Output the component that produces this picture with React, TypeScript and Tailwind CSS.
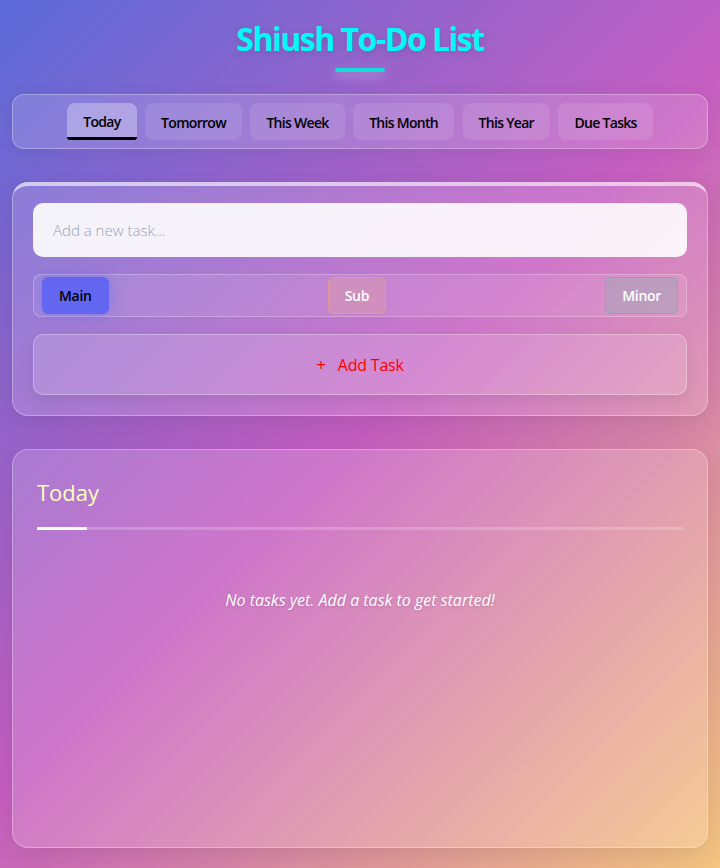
import React from "react";

const tabs = ["Today", "Tomorrow", "This Week", "This Month", "This Year", "Due Tasks"];

export default function App() {
  return (
    <div
      className="min-h-screen px-3 pt-[19px] pb-5 bg-[linear-gradient(135deg,#5a6ad8_0%,#c65ec1_50%,#f6c680_100%)]"
      style={{ fontFamily: '"Open Sans", "Noto Sans", sans-serif' }}
    >
      <h1 className="text-center text-[32px] leading-[40px] font-bold text-[#00fbf6] tracking-[-1.5px] [text-shadow:0_2px_8px_rgba(0,0,0,0.12)]">
        Shiush To-Do List
      </h1>
      <div className="mx-auto mt-[9px] h-[4px] w-[50px] rounded-full bg-[#10e0d6] shadow-[0_4px_10px_rgba(255,255,255,0.35)]" />

      <nav className="mt-[22px] flex justify-center gap-[8.5px] rounded-xl border border-white/30 bg-white/15 py-2 shadow-[0_4px_20px_rgba(0,0,0,0.06)]">
        {tabs.map((t, i) => (
          <button
            key={t}
            className={
              i === 0
                ? "h-[37px] rounded-t-lg rounded-b-[3px] border-b-[3px] border-black bg-white/30 px-4 pt-[3px] text-[14px] font-semibold text-black tracking-[-0.7px]"
                : "h-[37px] rounded-lg bg-white/10 px-4 pt-[2px] text-[14px] font-semibold text-black tracking-[-0.7px]"
            }
          >
            {t}
          </button>
        ))}
      </nav>

      <section className="mt-[33px] rounded-2xl border border-white/30 border-t-[4px] border-t-white/60 bg-white/15 px-5 pb-5 pt-[17px] shadow-[0_8px_30px_rgba(0,0,0,0.1)]">
        <input
          placeholder="Add a new task..."
          className="h-[54px] w-full rounded-[10px] bg-white/90 px-5 text-[15px] font-light text-gray-700 outline-none placeholder:text-[#9aa3b5]"
        />
        <div className="mt-[17px] flex h-[43px] items-center justify-between rounded-lg border border-white/25 bg-white/10 px-2">
          <button className="h-[37px] rounded-md border border-[#6366f1] bg-[#6366f1] px-4 text-[14px] font-semibold text-black shadow-[0_0_14px_rgba(99,102,241,0.55)] tracking-[-0.3px]">
            Main
          </button>
          <button className="h-[37px] rounded-md border border-[#e6a07a]/70 bg-[#e0a0a0]/40 px-4 text-[14px] font-semibold text-white tracking-[-0.3px]">
            Sub
          </button>
          <button className="h-[37px] rounded-md border border-[#6ab5a8]/80 bg-[#a0a8b8]/50 px-4 text-[14px] font-semibold text-white tracking-[-0.3px]">
            Minor
          </button>
        </div>
        <button className="mt-[17px] flex h-[61px] w-full items-center justify-center gap-3 rounded-[10px] border border-white/30 bg-white/15 text-[16px] font-medium text-[#ff0000] shadow-[0_6px_16px_rgba(0,0,0,0.08)] tracking-[-0.2px]">
          <span className="text-[17px] leading-none">+</span>
          <span>Add Task</span>
        </button>
      </section>

      <section className="mt-[33px] min-h-[399px] rounded-2xl border border-white/30 bg-white/15 p-6 shadow-[0_8px_30px_rgba(0,0,0,0.1)]">
        <h2 className="pt-[2px] text-[22px] leading-[33px] font-medium text-[#ffffb8]">Today</h2>
        <div className="mt-[18px] h-[3px] w-full bg-white/20">
          <div className="h-[3px] w-[50px] bg-white" />
        </div>
        <p className="mt-[59px] text-center text-[16px] leading-[22px] italic text-white [text-shadow:0_1px_3px_rgba(0,0,0,0.15)]">
          No tasks yet. Add a task to get started!
        </p>
      </section>
    </div>
  );
}
